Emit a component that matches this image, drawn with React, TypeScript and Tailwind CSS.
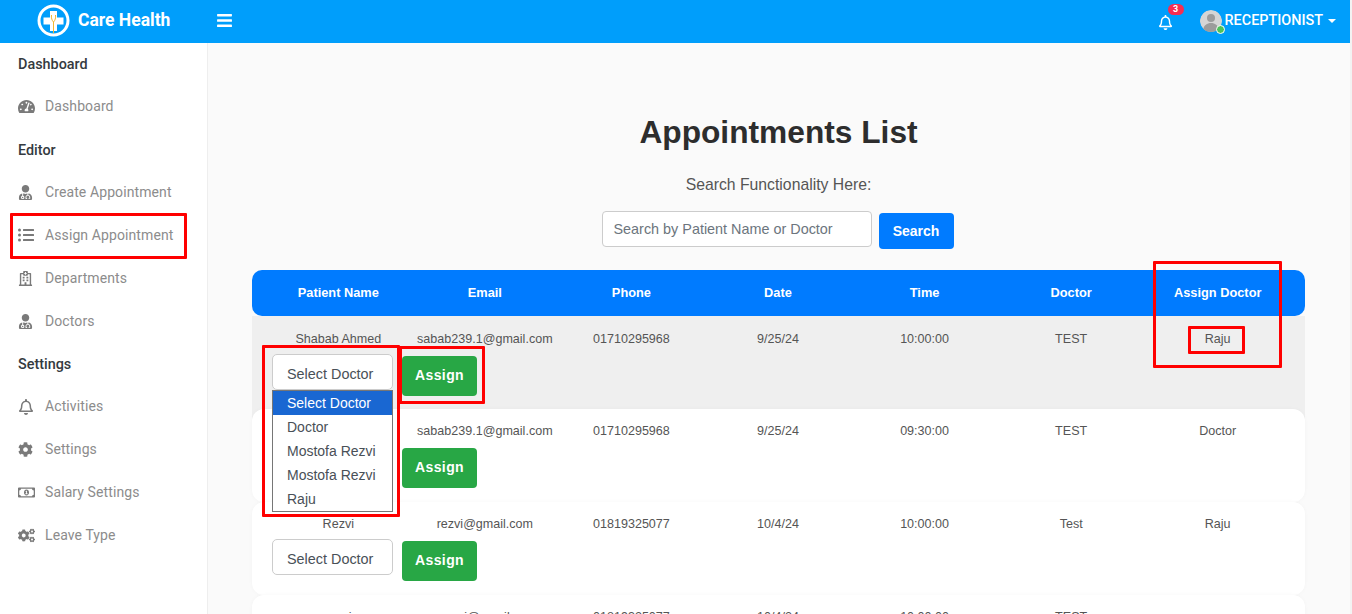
import { FaBars, FaCog, FaCogs, FaListUl, FaRegBell, FaRegHospital, FaRegMoneyBillAlt, FaTachometerAlt, FaUserMd } from 'react-icons/fa';
import type { IconType } from 'react-icons';

const nav: { heading: string; items: { icon: IconType; size: number; label: string }[] }[] = [
  { heading: 'Dashboard', items: [{ icon: FaTachometerAlt, size: 17, label: 'Dashboard' }] },
  {
    heading: 'Editor',
    items: [
      { icon: FaUserMd, size: 15, label: 'Create Appointment' },
      { icon: FaListUl, size: 16, label: 'Assign Appointment' },
      { icon: FaRegHospital, size: 15, label: 'Departments' },
      { icon: FaUserMd, size: 15, label: 'Doctors' },
    ],
  },
  {
    heading: 'Settings',
    items: [
      { icon: FaRegBell, size: 16, label: 'Activities' },
      { icon: FaCog, size: 15, label: 'Settings' },
      { icon: FaRegMoneyBillAlt, size: 17, label: 'Salary Settings' },
      { icon: FaCogs, size: 17, label: 'Leave Type' },
    ],
  },
];

const columns = ['Patient Name', 'Email', 'Phone', 'Date', 'Time', 'Doctor', 'Assign Doctor'];

const rows = [
  ['Shabab Ahmed', 'sabab239.1@gmail.com', '01710295968', '9/25/24', '10:00:00', 'TEST', 'Raju'],
  ['Shabab Ahmed', 'sabab239.1@gmail.com', '01710295968', '9/25/24', '09:30:00', 'TEST', 'Doctor'],
  ['Rezvi', 'rezvi@gmail.com', '01819325077', '10/4/24', '10:00:00', 'Test', 'Raju'],
  ['rezvi', 'ronasi@gmail.com', '01819325077', '10/4/24', '10:00:00', 'TEST', ''],
];

const options = ['Select Doctor', 'Doctor', 'Mostofa Rezvi', 'Mostofa Rezvi', 'Raju'];

function Logo() {
  return (
    <svg width="33" height="33" viewBox="0 0 33 33">
      <circle cx="16.5" cy="16.5" r="14.5" fill="none" stroke="#fff" strokeWidth="3" />
      <path d="M13 7h7v6.500h6.500v7H20V27h-7v-6.500H6.500v-7H13z" fill="#fff" />
      <path d="M14.500 11c-.5 3 .5 5.500 2 7 1.500-1.500 2.500-4 2-7M16.500 18v11" fill="none" stroke="#f2b632" strokeWidth="1" />
    </svg>
  );
}

function Avatar() {
  return (
    <div className="relative h-[22px] w-[22px]">
      <svg width="22" height="22" viewBox="0 0 22 22" className="rounded-full">
        <circle cx="11" cy="11" r="11" fill="#d5d5d5" />
        <circle cx="11" cy="8" r="4" fill="#9c9c9c" />
        <path d="M3 20c1-5 4-7 8-7s7 2 8 7l-4 2H7z" fill="#9c9c9c" />
      </svg>
      <span className="absolute bottom-[-2px] right-[-3px] h-[9px] w-[9px] rounded-full border border-white bg-[#4cc35a]" />
    </div>
  );
}

function Header() {
  return (
    <header className="flex h-[43px] items-center bg-[#009efb] pb-[2px] pr-[14px] text-white">
      <div className="ml-[37px] flex items-center gap-2">
        <Logo />
        <span className="font-['Roboto',sans-serif] text-[17.500px] font-bold">Care Health</span>
      </div>
      <FaBars className="ml-[46px] text-[17px]" />
      <div className="ml-auto flex items-center">
        <div className="relative mt-[3px]">
          <FaRegBell className="text-[15px]" />
          <span className="absolute left-[10px] top-[-11px] flex h-[11px] w-[16px] items-center justify-center rounded-full bg-[#f62d51] font-['Roboto',sans-serif] text-[9px] font-bold leading-none">
            3
          </span>
        </div>
        <div className="ml-[27px]">
          <Avatar />
        </div>
        <span className="ml-[3px] font-['Roboto',sans-serif] text-[14.400px] font-medium">RECEPTIONIST</span>
        <span className="ml-[5px] h-0 w-0 border-x-[4px] border-t-[4px] border-x-transparent border-t-white" />
      </div>
    </header>
  );
}

function Sidebar() {
  return (
    <aside className="w-[208px] shrink-0 border-r border-[#eeeeee] bg-white pl-[18px] pt-[12px] font-['Roboto',sans-serif]">
      {nav.map((group) => (
        <div key={group.heading}>
          <h3 className="flex h-[18px] items-center pt-[2px] text-[14.400px] font-medium text-[#343a40]">{group.heading}</h3>
          <ul className="mb-[12.500px] mt-[12px]">
            {group.items.map((item) => (
              <li key={item.label} className="flex h-[43px] items-center text-[14px] tracking-[0.1px] text-[#8c8c8c]">
                <span className="flex w-[17px] shrink-0">
                  <item.icon size={item.size} className="shrink-0 text-[#7a7a7a]" />
                </span>
                <span className="ml-[10px]">{item.label}</span>
              </li>
            ))}
          </ul>
        </div>
      ))}
    </aside>
  );
}

function DoctorSelect() {
  return (
    <div className="flex h-[36px] w-[121px] items-center rounded-[5px] border border-[#cccccc] bg-white pl-[14px] pt-[5px] text-[14.400px] text-[#495057]">
      Select Doctor
    </div>
  );
}

function Row({ cells, index }: { cells: string[]; index: number }) {
  const first = index === 0;
  return (
    <div
      className={
        first
          ? 'relative -mb-[12px] h-[105px] bg-[#efefef] pl-[13px] pr-[14px] pt-[1px]'
          : 'relative h-[93px] rounded-[12px] bg-white pl-[13px] pr-[14px] shadow-[0_0_4px_rgba(0,0,0,0.03)]'
      }
    >
      <div className="grid h-[44px] grid-cols-7 items-center text-center text-[12.550px] text-[#555555]">
        {cells.map((c, i) => (
          <div key={i}>{c}</div>
        ))}
      </div>
      <div className="-mt-[7px] flex gap-[9px] pl-[7px]">
        <DoctorSelect />
        <button className="mt-[2px] h-[40px] w-[75px] rounded-[4px] bg-[#28a745] pb-[2px] text-[14px] font-bold tracking-[0.4px] text-white">
          Assign
        </button>
      </div>
    </div>
  );
}

function Annotation({ className }: { className: string }) {
  return <div className={`pointer-events-none absolute z-30 rounded-[1px] border-[3px] border-[#ff0000] ${className}`} />;
}

export default function App() {
  return (
    <div className="relative h-[614px] w-[1352px] overflow-hidden bg-[#f3f3f3] font-['Liberation_Sans',Arial,sans-serif]">
      <div className="w-[1350px]">
        <Header />
        <div className="flex h-[571px]">
          <Sidebar />
          <main className="min-w-0 flex-1 overflow-hidden bg-[#fafafa] pl-[44px] pr-[45px]">
            <h1 className="mt-[70px] text-center text-[31.700px] font-bold leading-[38px] text-[#2d2d2d]">Appointments List</h1>
            <p className="mt-[24px] text-center text-[15.750px] leading-[20px] text-[#555555]">Search Functionality Here:</p>
            <div className="mt-[16px] flex justify-center pr-[2px]">
              <div className="flex h-[36px] w-[270px] items-center rounded-[4px] border border-[#cccccc] bg-white pl-[11px] pt-[2px] text-[14.400px] text-[#6c757d]">
                Search by Patient Name or Doctor
              </div>
              <button className="ml-[7px] mt-[2px] h-[36px] w-[75px] rounded-[4px] bg-[#007bff] text-[14px] font-bold text-white">Search</button>
            </div>
            <div className="mt-[21px]">
              <div className="grid h-[46px] grid-cols-7 items-center rounded-[10px] bg-[#007bff] pl-[13px] pr-[14px] text-center text-[12.800px] font-bold text-white">
                {columns.map((c) => (
                  <div key={c}>{c}</div>
                ))}
              </div>
              {rows.map((cells, i) => (
                <Row key={i} cells={cells} index={i} />
              ))}
            </div>
          </main>
        </div>
      </div>

      {/* open native select list */}
      <ul className="absolute left-[272px] top-[390px] z-20 w-[121px] border border-[#767676] bg-white text-[14px] text-[#495057]">
        {options.map((o, i) => (
          <li key={i} className={i === 0 ? 'flex h-[24px] items-center bg-[#1967d2] pl-[14px] text-white' : 'flex h-[24px] items-center pl-[14px]'}>
            {o}
          </li>
        ))}
      </ul>

      {/* red review marks */}
      <Annotation className="left-[10px] top-[213px] h-[46px] w-[177px]" />
      <Annotation className="left-[262px] top-[345px] h-[172px] w-[138px]" />
      <Annotation className="left-[399px] top-[346px] h-[58px] w-[86px]" />
      <Annotation className="left-[1153px] top-[261px] h-[107px] w-[129px]" />
      <Annotation className="left-[1188px] top-[326px] h-[28px] w-[57px]" />
    </div>
  );
}
